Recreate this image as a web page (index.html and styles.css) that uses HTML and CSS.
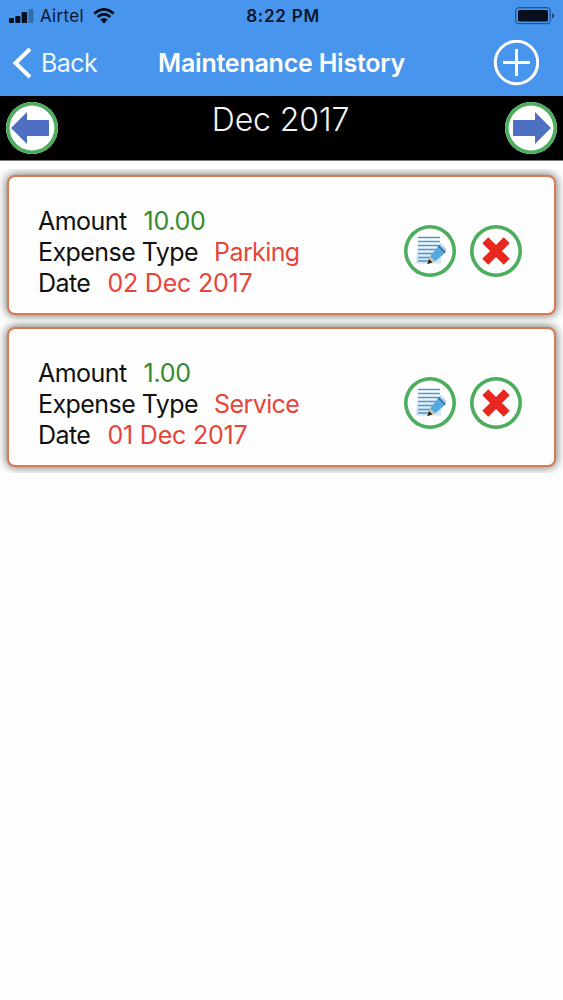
FILE: index.html
```html
<!DOCTYPE html>
<html lang="en">

<head>
    <meta charset="UTF-8">
    <meta name="viewport" content="width=device-width, initial-scale=1.0">
    <title>Maintenance History</title>
    <link rel="stylesheet" href="styles.css">
</head>

<body>

    <header class="top-bar">
        <div class="status-bar">
            <div class="carrier">
                <svg class="signal" width="25" height="15" viewBox="0 0 25 15">
                    <rect x="0" y="9" width="5" height="5" rx="1" />
                    <rect x="6.3" y="7" width="5" height="7" rx="1" />
                    <rect x="12.6" y="3" width="5.5" height="11" rx="1" />
                    <rect x="19.5" y="0" width="5" height="14" rx="1" opacity="0.3" />
                </svg>
                <span class="carrier-name">Airtel</span>
                <svg class="wifi" width="22" height="16" viewBox="0 0 22 16">
                    <path d="M1.3 5.6Q11 -2.8 20.7 5.6" />
                    <path d="M4.6 9Q11 3.4 17.4 9" />
                    <path class="dot" d="M7.2 11.6Q11 8.4 14.8 11.6L11 15.4Z" />
                </svg>
            </div>
            <div class="clock">8:22 PM</div>
            <svg class="battery" width="40" height="18" viewBox="0 0 40 18">
                <rect class="shell" x="0.7" y="0.7" width="34.6" height="16" rx="3.5" />
                <rect x="3" y="3" width="30" height="11.5" rx="1.5" />
                <path d="M37 6Q39.2 7 39.2 8.7T37 11.4Z" opacity="0.6" />
            </svg>
        </div>
        <nav class="nav-bar">
            <a class="back" href="#">
                <svg width="20" height="34" viewBox="0 0 20 34">
                    <path d="M18 3L3.500 17L18 31" />
                </svg>
                <span>Back</span>
            </a>
            <h1>Maintenance History</h1>
            <a class="add" href="#" aria-label="Add">
                <svg width="46" height="46" viewBox="0 0 46 46">
                    <circle cx="23.500" cy="22.500" r="21.2" />
                    <path d="M10 22.500H37M23.500 9V36" />
                </svg>
            </a>
        </nav>
    </header>

    <section class="month-bar">
        <button class="round-btn" aria-label="Previous month">
            <svg width="46" height="46" viewBox="0 0 46 46">
                <path class="arrow" d="M2 23L18 7V15H40V31H18V39Z" />
            </svg>
        </button>
        <h2>Dec 2017</h2>
        <button class="round-btn" aria-label="Next month">
            <svg width="46" height="46" viewBox="0 0 46 46">
                <path class="arrow" d="M43 23L27 7V15H5V31H27V39Z" />
            </svg>
        </button>
    </section>

    <!-- Icons shared by the cards -->
    <svg class="defs" width="0" height="0">
        <linearGradient id="sheet" x1="0" y1="0" x2="0" y2="1">
            <stop offset="0" stop-color="#fff" />
            <stop offset="1" stop-color="#cfe3f3" />
        </linearGradient>
        <symbol id="edit" viewBox="0 0 46 46">
            <path d="M11 9H34V35.500H8.500Z" fill="url(#sheet)" />
            <path d="M11 9.500H33M11 13.500H33M11 17.500H33M11 21.500H33M11 25.500H31M11 29.500H27M11 33H25" stroke="#4f98c9" stroke-width="1.700" />
            <path d="M31.500 17.500L38.500 24.500L28 33.500L23 28.500Z" fill="#55a9df" />
            <path d="M31.500 17.500L34 15.500L39.500 21.500L38.500 24.500Z" fill="#a5d3ee" />
            <path d="M31.500 17.500L38 24.500" stroke="#285a86" stroke-width="1.300" />
            <path d="M23 28.500L28 33.500L20.500 36Z" fill="#e4c28a" />
            <path d="M22 31L25.500 34.500L20.300 36Z" fill="#222" />
        </symbol>
        <symbol id="delete" viewBox="0 0 46 46">
            <path d="M15.300 9.300L23 17L30.700 9.300L36.700 15.300L29 23L36.700 30.700L30.700 36.700L23 29L15.300 36.700L9.300 30.700L17 23L9.300 15.300Z" fill="#e8281f" />
        </symbol>
    </svg>

    <ul class="expense-list">
        <li>
            <div class="card">
                <div class="details">
                    <p><span class="label">Amount</span> <span class="amount">10.00</span></p>
                    <p><span class="label">Expense Type</span> <span class="type">Parking</span></p>
                    <p><span class="label">Date</span> <span class="date">02 Dec 2017</span></p>
                </div>
                <div class="actions">
                    <button class="round-btn" aria-label="Edit"><svg width="46" height="46"><use href="#edit" /></svg></button>
                    <button class="round-btn" aria-label="Delete"><svg width="46" height="46"><use href="#delete" /></svg></button>
                </div>
            </div>
        </li>
        <li>
            <div class="card">
                <div class="details">
                    <p><span class="label">Amount</span> <span class="amount">1.00</span></p>
                    <p><span class="label">Expense Type</span> <span class="type">Service</span></p>
                    <p><span class="label">Date</span> <span class="date">01 Dec 2017</span></p>
                </div>
                <div class="actions">
                    <button class="round-btn" aria-label="Edit"><svg width="46" height="46"><use href="#edit" /></svg></button>
                    <button class="round-btn" aria-label="Delete"><svg width="46" height="46"><use href="#delete" /></svg></button>
                </div>
            </div>
        </li>
    </ul>

</body>

</html>
```

FILE: styles.css
```css
/* Global Styles */
* {
    margin: 0;
    padding: 0;
    box-sizing: border-box;
}

body {
    font-family: Inter, 'Liberation Sans', sans-serif;
    background-color: #fefefe;
    color: #111;
}

svg {
    display: block;
}

.defs {
    position: absolute;
}

/* Header */
.top-bar {
    height: 96px;
    background-color: #4795ec;
}

.status-bar {
    display: grid;
    grid-template-columns: 1fr auto 1fr;
    align-items: center;
    height: 31px;
    padding: 0 8px 0 9px;
    color: #07162a;
    fill: #07101c;
}

.carrier {
    display: flex;
    align-items: center;
}

.signal {
    margin-top: 2px;
}

.carrier-name {
    margin-left: 6px;
    font-size: 17px;
    letter-spacing: 0.3px;
}

.wifi {
    margin-left: 9px;
}

.wifi path {
    fill: none;
    stroke: #07101c;
    stroke-width: 2.8;
}

.wifi .dot {
    fill: #07101c;
    stroke: none;
}

.clock {
    padding-left: 2px;
    font-size: 17px;
    font-weight: 600;
    letter-spacing: 0.75px;
}

.battery {
    justify-self: end;
}

.battery .shell {
    fill: none;
    stroke: #23588f;
    stroke-width: 1.3;
}

.nav-bar {
    display: grid;
    grid-template-columns: 1fr auto 1fr;
    align-items: center;
    height: 64px;
    padding: 0 24px 0 12px;
    color: #fff;
}

.nav-bar svg {
    fill: none;
    stroke: #fff;
    stroke-width: 3;
}

.back {
    display: flex;
    align-items: center;
    gap: 9px;
    color: #eef8ff;
    font-size: 25px;
    letter-spacing: -0.6px;
    text-decoration: none;
}

.back svg {
    stroke-width: 4;
}

.nav-bar h1 {
    padding-left: 12px;
    font-size: 25px;
    font-weight: 600;
    letter-spacing: -0.22px;
}

.add {
    justify-self: end;
}

/* Month picker */
.month-bar {
    display: flex;
    justify-content: space-between;
    height: 65px;
    padding: 6px 6px 0;
    background-color: #000;
    border-bottom: 1px solid #777;
}

.month-bar h2 {
    padding-right: 2px;
    color: #f4f4f4;
    font-size: 32px;
    font-weight: 350;
    letter-spacing: -0.1px;
    line-height: 35px;
}

.round-btn {
    display: flex;
    align-items: center;
    justify-content: center;
    width: 52px;
    height: 52px;
    background-color: #fff;
    border: none;
    border-radius: 50%;
    box-shadow: inset 0 0 0 3.6px #4aae5c;
}

.round-btn svg {
    flex: none;
}

.arrow {
    fill: #4e70c2;
}

/* Expense cards */
.expense-list {
    padding-top: 8px;
    list-style: none;
}

.expense-list li {
    height: 152px;
    padding: 6px 7px;
    overflow: hidden;
}

.card {
    display: flex;
    align-items: center;
    justify-content: space-between;
    height: 140px;
    padding: 12px 32px 0 29px;
    background-color: #fefefe;
    border: 2px solid #d9794f;
    border-radius: 8px;
    box-shadow: 0 0 10px 1px #777;
}

.details {
    padding-top: 2px;
}

.details p {
    font-size: 25px;
    line-height: 31px;
    white-space: nowrap;
}

.details .label {
    margin-right: 9px;
    letter-spacing: -0.55px;
}

.details .amount {
    margin-left: 1px;
    color: #378a2c;
    letter-spacing: -0.3px;
}

.details .type,
.details .date {
    color: #e8453a;
}

.details .type {
    letter-spacing: -0.6px;
}

.details .date {
    margin-left: 1px;
    letter-spacing: -0.2px;
}

.actions {
    display: flex;
    gap: 14px;
}
```
